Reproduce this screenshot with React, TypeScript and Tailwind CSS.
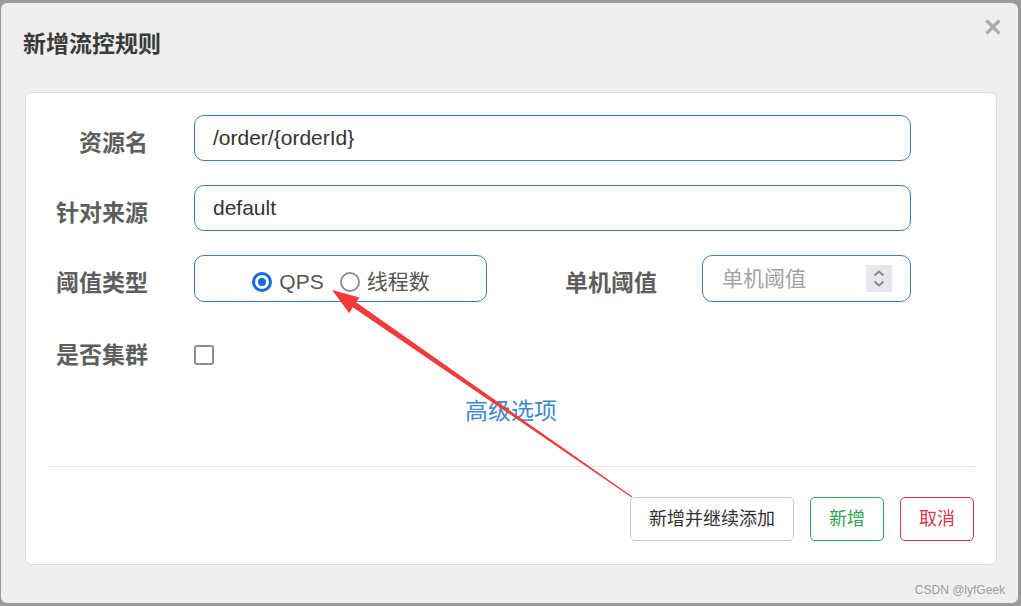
import React from "react";

const cjk = "font-['Liberation_Sans','Noto_Sans_CJK_SC',sans-serif]";

const Label: React.FC<{ text: string; width?: string; low?: boolean }> = ({ text, width = "w-[122px]", low }) => (
  <div
    className={`${width} shrink-0 text-right text-[23px] font-bold text-[#5e5e5e] leading-[30px] ${low ? "mt-[9px]" : ""}`}
  >
    {text}
  </div>
);

const Radio: React.FC<{ checked?: boolean; label: string }> = ({ checked, label }) => (
  <label className="flex items-center gap-[7px]">
    <span
      className={`w-[20px] h-[20px] rounded-full flex items-center justify-center ${
        checked ? "border-[3px] border-[#1868d6]" : "border-[2px] border-[#8e8e9c]"
      }`}
    >
      {checked && <span className="w-[8px] h-[8px] rounded-full bg-[#1868d6]" />}
    </span>
    <span className="text-[21px] text-[#555] leading-[28px]">{label}</span>
  </label>
);

export default function App() {
  return (
    <div className={`relative w-[1021px] h-[606px] bg-[#9a9a9a] pt-[3px] pl-[1px] pr-[3px] pb-[3px] ${cjk}`}>
      <div className="w-full h-full bg-[#efefef] rounded-[6px] flex flex-col">
        {/* Header */}
        <div className="h-[89px] shrink-0 flex justify-between pl-[22px] pr-[17px]">
          <h3 className="pt-[26px] text-[23px] font-bold leading-[30px] text-[#3a3a3a]">新增流控规则</h3>
          <button className="mt-[16px] w-[16px] h-[16px]">
            <svg viewBox="0 0 16 16" className="w-[16px] h-[16px]">
              <path d="M1.5 1.5L14.5 14.5M14.5 1.5L1.5 14.5" stroke="#adadad" strokeWidth="3.2" />
            </svg>
          </button>
        </div>

        {/* Card */}
        <div className="ml-[24px] mr-[21px] bg-white border border-[#dcdcdc] rounded-[7px] pt-[22px] pb-[23px] flex flex-col">
          <div className="flex items-center h-[46px]">
            <Label text="资源名" low />
            <div className="ml-[46px] w-[717px] h-[46px] border border-[#3b7dc0] rounded-[10px] flex items-center px-[18px] text-[21px] text-[#333]">
              /order/{"{"}orderId{"}"}
            </div>
          </div>

          <div className="flex items-center h-[46px] mt-[24px]">
            <Label text="针对来源" low />
            <div className="ml-[46px] w-[717px] h-[46px] border border-[#3b7dc0] rounded-[10px] flex items-center px-[18px] text-[21px] text-[#333]">
              default
            </div>
          </div>

          <div className="flex items-center h-[47px] mt-[24px]">
            <Label text="阈值类型" low />
            <div className="ml-[46px] w-[293px] h-[47px] border border-[#3b7dc0] rounded-[10px] flex items-center justify-center gap-[16px] pt-[7px] pl-[1px]">
              <Radio checked label="QPS" />
              <Radio label="线程数" />
            </div>
            <Label text="单机阈值" width="w-[170px]" low />
            <div className="ml-[45px] w-[209px] h-[47px] border border-[#3b7dc0] rounded-[10px] flex items-center justify-between pl-[19px] pr-[18px]">
              <span className="text-[21px] text-[#a3a3a3]">单机阈值</span>
              <span className="w-[26px] h-[27px] bg-[#e7e7ed] flex items-center justify-center">
                <svg viewBox="0 0 26 27" className="w-[26px] h-[27px]">
                  <path d="M8.5 10.5L13 6.5L17.5 10.5M8.5 16.5L13 20.5L17.5 16.5" stroke="#85858f" strokeWidth="1.8" fill="none" />
                </svg>
              </span>
            </div>
          </div>

          <div className="flex items-center h-[46px] mt-[30px]">
            <Label text="是否集群" />
            <span className="ml-[46px] w-[20px] h-[20px] border-[2px] border-[#8b8b99] rounded-[3px]" />
          </div>

          <div className="mt-[18px] text-center text-[23px] leading-[30px] text-[#3d8ad0]">高级选项</div>

          <div className="mt-[40px] mx-[21px] h-px bg-[#e6e6e6]" />

          <div className="mt-[30px] flex justify-end gap-[16px] pr-[22px]">
            <button className="h-[44px] w-[164px] border border-[#cccccc] rounded-[5px] text-[18px] text-[#333]">
              新增并继续添加
            </button>
            <button className="h-[44px] w-[74px] border border-[#2ea44f] rounded-[5px] text-[18px] text-[#2ea44f]">
              新增
            </button>
            <button className="h-[44px] w-[74px] border border-[#d9384a] rounded-[5px] text-[18px] text-[#d9384a]">
              取消
            </button>
          </div>
        </div>

        {/* Footer watermark */}
        <div className="flex-1 flex justify-end items-start pt-[17px] pr-[13px]">
          <span className="text-[12px] leading-[16px] text-[#9c9c9c]">CSDN @lyfGeek</span>
        </div>
      </div>

      {/* Annotation arrow */}
      <svg className="absolute inset-0 pointer-events-none" width="1021" height="606" viewBox="0 0 1021 606">
        <polygon
          points="332,290 359.5,297.4 356.1,302.3 632.3,496.6 631.7,497.4 352.7,307.3 349.3,313.2"
          fill="#f23c3c"
        />
      </svg>
    </div>
  );
}
